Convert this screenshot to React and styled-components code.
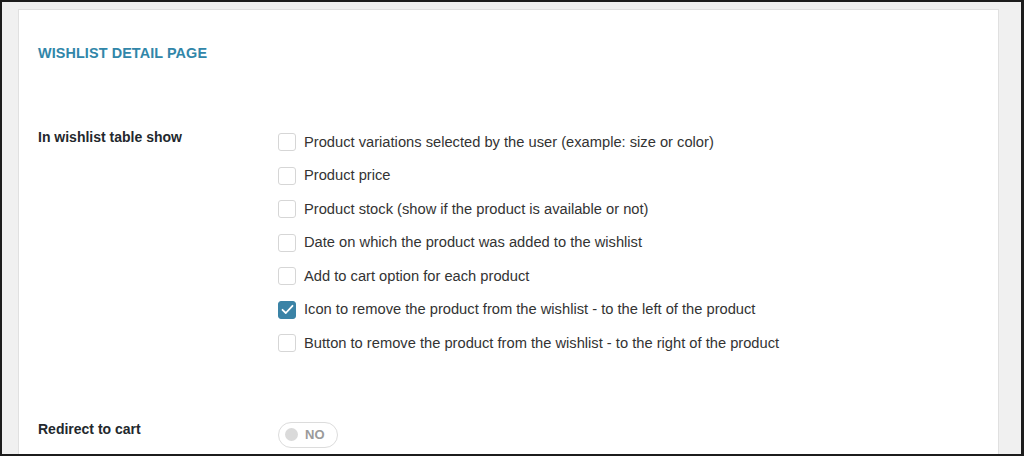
import React, { useState } from "react";
import styled, { createGlobalStyle } from "styled-components";

const GlobalStyle = createGlobalStyle`
	html, body {
		margin: 0;
		padding: 0;
		background: #f1f1f1;
	}
	* {
		box-sizing: border-box;
	}
`;

const Frame = styled.div`
	height: 456px;
	overflow: hidden;
	border: 2px solid #1c1c1c;
	border-right-width: 3px;
	border-bottom-width: 2px;
	background: #f0f0f0;
	padding: 7px 22px 0 16px;
	font-family: "Liberation Sans", Arial, sans-serif;
`;

const Panel = styled.div`
	height: 100%;
	background: #fff;
	border: 1px solid #e0e0e0;
	border-bottom: none;
	padding: 35px 19px 0 19px;
`;

const Heading = styled.h2`
	margin: 0;
	font-size: 14.4px;
	line-height: 17px;
	font-weight: 700;
	color: #3186a9;
	letter-spacing: 0.1px;
`;

const FormRow = styled.div`
	display: grid;
	grid-template-columns: 240px 1fr;
	margin-top: ${(p) => p.$top}px;
`;

const Label = styled.div`
	font-size: 14px;
	font-weight: 700;
	color: #23282d;
	line-height: 20px;
	padding-top: ${(p) => p.$pad || 0}px;
`;

const OptionList = styled.div`
	display: flex;
	flex-direction: column;
`;

const Option = styled.label`
	display: flex;
	align-items: center;
	height: 33.5px;
	gap: 8px;
	font-size: 14.7px;
	color: #333;
	cursor: pointer;
`;

const Box = styled.span`
	width: 18px;
	height: 18px;
	border-radius: 3px;
	flex-shrink: 0;
	display: flex;
	align-items: center;
	justify-content: center;
	border: 1px solid ${(p) => (p.$checked ? "#3b83a6" : "#d6d6d6")};
	background: ${(p) => (p.$checked ? "#3b83a6" : "#fff")};
	margin-top: 1px;
`;

const Toggle = styled.button`
	display: flex;
	align-items: center;
	gap: 7px;
	width: 60px;
	height: 26px;
	margin-top: 3px;
	padding: 0 0 0 6px;
	border: 1px solid #dcdcdc;
	border-radius: 13px;
	background: #fff;
	cursor: pointer;
	font-family: inherit;
`;

const Knob = styled.span`
	width: 13px;
	height: 13px;
	border-radius: 50%;
	background: #dadada;
`;

const ToggleText = styled.span`
	font-size: 13px;
	font-weight: 700;
	color: #9a9a9a;
`;

const options = [
	"Product variations selected by the user (example: size or color)",
	"Product price",
	"Product stock (show if the product is available or not)",
	"Date on which the product was added to the wishlist",
	"Add to cart option for each product",
	"Icon to remove the product from the wishlist - to the left of the product",
	"Button to remove the product from the wishlist - to the right of the product",
];

const Check = () => (
	<svg width="13" height="11" viewBox="0 0 13 11">
		<path
			d="M1.5 5.8 L4.8 9 L11.5 1.8"
			fill="none"
			stroke="#fff"
			strokeWidth="1.8"
			strokeLinecap="round"
			strokeLinejoin="round"
		/>
	</svg>
);

const App = () => {
	const [checked, setChecked] = useState([5]);

	const toggle = (i) =>
		setChecked(
			checked.includes(i) ? checked.filter((c) => c !== i) : [...checked, i]
		);

	return (
		<>
			<GlobalStyle />
			<Frame>
				<Panel>
					<Heading>WISHLIST DETAIL PAGE</Heading>
					<FormRow $top={63}>
						<Label $pad={2}>In wishlist table show</Label>
						<OptionList>
							{options.map((text, i) => (
								<Option key={i} onClick={() => toggle(i)}>
									<Box $checked={checked.includes(i)}>
										{checked.includes(i) && <Check />}
									</Box>
									{text}
								</Option>
							))}
						</OptionList>
					</FormRow>
					<FormRow $top={59}>
						<Label>Redirect to cart</Label>
						<div>
							<Toggle>
								<Knob />
								<ToggleText>NO</ToggleText>
							</Toggle>
						</div>
					</FormRow>
				</Panel>
			</Frame>
		</>
	);
};

export default App;
